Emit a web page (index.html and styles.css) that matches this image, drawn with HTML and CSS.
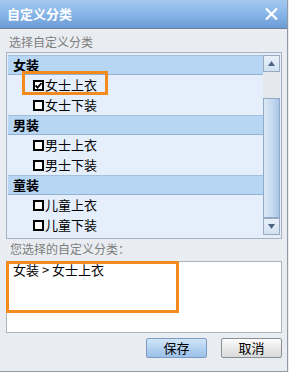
FILE: index.html
```html
<!DOCTYPE html>
<html>
<head>
<meta charset="utf-8">
<link rel="stylesheet" href="styles.css">
</head>
<body>
<div class="win">
  <div class="titlebar">
    <span class="title">自定义分类</span>
    <svg class="close" width="13" height="12" viewBox="0 0 13 12"><path d="M1 0.5 L12 11.5 M12 0.5 L1 11.5" stroke="#fff" stroke-width="2.2" fill="none"/></svg>
  </div>
  <div class="content">
    <div class="label top">选择自定义分类</div>
    <div class="list">
      <div class="rows">
        <div class="group">女装</div>
        <div class="item"><span class="cb on"><svg width="7" height="7" viewBox="0 0 7 7"><path d="M0.5 3.5 L2.6 5.6 L6.5 1" stroke="#000" stroke-width="1.8" fill="none"/></svg></span>女士上衣<span class="hl"></span></div>
        <div class="item"><span class="cb"></span>女士下装</div>
        <div class="group">男装</div>
        <div class="item"><span class="cb"></span>男士上衣</div>
        <div class="item"><span class="cb"></span>男士下装</div>
        <div class="group">童装</div>
        <div class="item"><span class="cb"></span>儿童上衣</div>
        <div class="item"><span class="cb"></span>儿童下装</div>
      </div>
      <div class="scroll">
        <div class="sbtn"><svg width="7" height="5" viewBox="0 0 7 5"><path d="M3.5 0 L7 5 L0 5Z" fill="#4d6585"/></svg></div>
        <div class="track"></div>
        <div class="thumb"></div>
        <div class="sbtn"><svg width="7" height="5" viewBox="0 0 7 5"><path d="M0 0 L7 0 L3.5 5Z" fill="#4d6585"/></svg></div>
      </div>
    </div>
    <div class="label sel">您选择的自定义分类：</div>
    <div class="result">女装 &gt; 女士上衣<span class="hl2"></span></div>
    <div class="actions">
      <button class="btn primary">保存</button>
      <button class="btn">取消</button>
    </div>
  </div>
</div>
</body>
</html>
```
FILE: styles.css
```css
html, body {
  margin: 0;
  padding: 0;
  background: #e9edf1;
}
body {
  font-family: "Noto Sans CJK SC", "Liberation Sans", sans-serif;
  font-size: 13px;
  color: #000;
}
.win {
  width: 287px;
  height: 371px;
  border-right: 1px solid #8f9aa6;
  border-bottom: 1px solid #8f9aa6;
  background: #e9edf1;
}
.titlebar {
  height: 28px;
  border-bottom: 1px solid #6f8299;
  background: linear-gradient(#a3c8ef, #8ab8e9 45%, #6b9bd6);
  display: flex;
  align-items: center;
  justify-content: space-between;
  padding: 0 9px 0 7px;
}
.title {
  color: #fff;
  font-weight: bold;
  font-size: 13px;
  line-height: 16px;
}
.close { display: block; }
.content {
  padding: 0 5px 0 6px;
}
.label {
  color: #7d7d7d;
  font-size: 12px;
  line-height: 16px;
}
.label.top {
  padding: 5px 0 2px 3px;
}
.label.sel {
  padding: 2px 0 4px 4px;
}
.list {
  border: 1px solid #a6b2c0;
  background: #e5effb;
  padding: 2px 1px 1px 1px;
  display: flex;
}
.rows {
  flex: 1;
  height: 182px;
}
.group {
  height: 18px;
  line-height: 18px;
  border-top: 1px solid #a3c0dd;
  border-bottom: 1px solid #94b3d2;
  background: #b6d6f4;
  font-weight: bold;
  padding-left: 5px;
}
.item {
  position: relative;
  height: 20px;
  line-height: 20px;
  padding-left: 25px;
  display: flex;
  align-items: center;
}
.cb {
  width: 7px;
  height: 7px;
  border: 2px solid #000;
  background: #fff;
  margin-right: 1px;
  display: inline-flex;
}
.cb svg { display: block; }
.hl {
  position: absolute;
  left: 14px;
  top: -4px;
  width: 80px;
  height: 18px;
  border: 3px solid #f28a1e;
}
.scroll {
  width: 17px;
  display: flex;
  flex-direction: column;
}
.sbtn {
  height: 15px;
  border: 1px solid #9aabc0;
  background: linear-gradient(#e8f0f9, #d2e1f1);
  display: flex;
  align-items: center;
  justify-content: center;
  box-sizing: content-box;
  width: 15px;
}
.track {
  height: 26px;
  background: #e4e8ec;
}
.thumb {
  height: 118px;
  border: 1px solid #8fa9c7;
  width: 15px;
  background: linear-gradient(90deg, #dbe8f6, #c3d8ef 60%, #a9c5e4);
}
.result {
  position: relative;
  height: 70px;
  border: 1px solid #aab5c2;
  background: #fff;
  padding-left: 6px;
  line-height: 16px;
}
.hl2 {
  position: absolute;
  left: -1px;
  top: -1px;
  width: 167px;
  height: 46px;
  border: 3px solid #f28a1e;
}
.actions {
  display: flex;
  justify-content: flex-end;
  gap: 14px;
  margin-top: 5px;
}
.btn {
  width: 61px;
  height: 20px;
  padding: 0;
  font-family: "Noto Sans CJK SC", sans-serif;
  font-size: 13px;
  line-height: 16px;
  color: #000;
  border: 1px solid #8a8f96;
  border-radius: 2px;
  background: linear-gradient(#fdfdfd, #e9e9e9 50%, #dadada);
}
.btn.primary {
  border-color: #7a9cc4;
  background: linear-gradient(#d2e5f8, #b4d2f1 50%, #9cc0e8);
}
```
